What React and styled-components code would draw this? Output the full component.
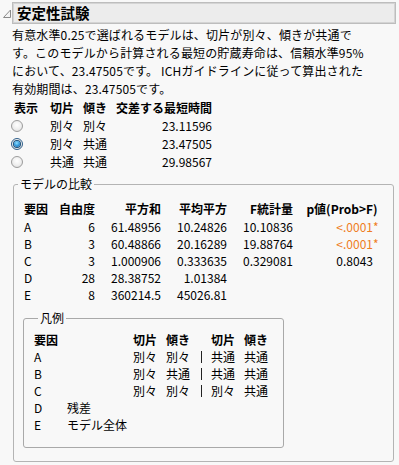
import { Fragment } from "react";
import styled, { createGlobalStyle } from "styled-components";

const Global = createGlobalStyle`
  html, body {
    margin: 0;
    background: #f8f8f8;
  }
  body {
    font-family: "Noto Sans CJK JP", "Noto Sans", sans-serif;
    font-size: 12px;
    color: #000;
  }
`

const Page = styled.div`
  width: 399px;
  height: 465px;
  box-sizing: border-box;
  padding: 2px 3px 0 3px;
  overflow: hidden;
`

const TitleRow = styled.div`
  display: flex;
  align-items: center;
`

const Disclosure = styled.svg`
  width: 9px;
  height: 22px;
  flex: none;
`

const TitleBox = styled.div`
  flex: 1;
  height: 22px;
  box-sizing: border-box;
  border: 1px solid #bdbdbd;
  outline: 1px solid #d4d4d4;
  outline-offset: -2px;
  background: #ececec;
  padding-left: 4px;
  font-size: 14.5px;
  font-weight: 700;
  line-height: 20px;
`

const Body = styled.div`
  margin-left: 9px;
`

const Note = styled.p`
  margin: 2px 0 0 0;
  line-height: 18px;
  white-space: nowrap;
  letter-spacing: 0.15px;
`

const Grid = styled.div`
  display: grid;
  grid-template-columns: ${props => props.$cols};
  grid-template-rows: ${props => props.$rows};
  margin-left: ${props => props.$indent || 0}px;
  white-space: nowrap;
`

const Cell = styled.div`
  display: flex;
  align-items: center;
  justify-content: ${props => props.$align === "right" ? "flex-end" : props.$align === "center" ? "center" : "flex-start"};
  padding-right: ${props => props.$pad || 0}px;
  font-weight: ${props => props.$head ? 700 : 400};
  color: ${props => props.$hot ? "#ef7d22" : "#000"};
`

const Star = styled.span`
  margin-right: -9px;
  width: 9px;
`

const Radio = styled.span`
  width: 12px;
  height: 12px;
  box-sizing: border-box;
  border-radius: 50%;
  margin-left: -3px;
  margin-top: 2px;
  border: 1px solid ${props => props.$on ? "#2f5f8a" : "#9c9c9c"};
  background: radial-gradient(circle at 50% 40%, #ffffff 0%, #eeeeee 55%, #d6d6d6 100%);
  display: flex;
  align-items: center;
  justify-content: center;
  &::after {
    content: "";
    display: ${props => props.$on ? "block" : "none"};
    width: 6px;
    height: 6px;
    border-radius: 50%;
    background: radial-gradient(circle at 45% 35%, #8fe0ff 0%, #2c93d8 55%, #135b94 100%);
    box-shadow: 0 0 0 1px #1c4f78;
  }
`

const GroupBox = styled.fieldset`
  margin: ${props => props.$outer ? "5px 2px 0 1px" : "6px 0 0 9px"};
  padding: ${props => props.$outer ? "6px 0 13px 0" : "3px 5px 14px 10px"};
  border: 1px solid ${props => props.$outer ? "#b4b4b4" : "#a9a9a9"};
  border-radius: 3px;
  width: ${props => props.$outer ? "auto" : "fit-content"};
  min-width: 0;
`

const GroupLegend = styled.legend`
  margin-left: 4px;
  padding: 0 2px;
  line-height: 18px;
`

const Sep = styled.span`
  display: block;
  width: 1px;
  height: 12px;
  margin-left: 2px;
  background: #222;
`

const choices = [
  ["別々", "別々", "23.11596", false],
  ["別々", "共通", "23.47505", true],
  ["共通", "共通", "29.98567", false],
]

const stats = [
  ["A", "6", "61.48956", "10.24826", "10.10836", "<.0001", true],
  ["B", "3", "60.48866", "20.16289", "19.88764", "<.0001", true],
  ["C", "3", "1.000906", "0.333635", "0.329081", "0.8043", false],
  ["D", "28", "28.38752", "1.01384", "", "", false],
  ["E", "8", "360214.5", "45026.81", "", "", false],
]

const legend = [
  ["A", "", "別々", "別々", "共通", "共通"],
  ["B", "", "別々", "共通", "共通", "共通"],
  ["C", "", "別々", "別々", "別々", "共通"],
  ["D", "残差", "", "", "", ""],
  ["E", "モデル全体", "", "", "", ""],
]

export default function App() {
  return (
    <Page>
      <Global />
      <TitleRow>
        <Disclosure viewBox="0 0 9 22">
          <polygon points="7.5,8 7.5,15.5 0.5,15.5" fill="#f4f4f4" stroke="#8a8a8a" strokeWidth="1" />
        </Disclosure>
        <TitleBox>安定性試験</TitleBox>
      </TitleRow>
      <Body>
        <Note>
          有意水準0.25で選ばれるモデルは、切片が別々、傾きが共通で<br />
          す。このモデルから計算される最短の貯蔵寿命は、信頼水準95%<br />
          において、23.47505です。 ICHガイドラインに従って算出された<br />
          有効期間は、23.47505です。
        </Note>

        <Grid $cols="36px 33px 33px 96px" $rows="repeat(4, 18px)" $indent={2}>
          <Cell $head>表示</Cell>
          <Cell $head>切片</Cell>
          <Cell $head>傾き</Cell>
          <Cell $head>交差する最短時間</Cell>
          {choices.map((c) => (
            <Fragment key={c[2]}>
              <Cell><Radio $on={c[3]} /></Cell>
              <Cell>{c[0]}</Cell>
              <Cell>{c[1]}</Cell>
              <Cell $align="right">{c[2]}</Cell>
            </Fragment>
          ))}
        </Grid>

        <GroupBox $outer>
          <GroupLegend>モデルの比較</GroupLegend>
          <Grid $cols="36px 35px 66px 66px 66px 98px" $rows="19px repeat(5, 17px)" $indent={10}>
            <Cell $head>要因</Cell>
            <Cell $head $align="right">自由度</Cell>
            <Cell $head $align="right">平方和</Cell>
            <Cell $head $align="right">平均平方</Cell>
            <Cell $head $align="right">F統計量</Cell>
            <Cell $head $align="center">p値(Prob&gt;F)</Cell>
            {stats.map((s) => (
              <Fragment key={s[0]}>
                <Cell>{s[0]}</Cell>
                <Cell $align="right">{s[1]}</Cell>
                <Cell $align="right">{s[2]}</Cell>
                <Cell $align="right">{s[3]}</Cell>
                <Cell $align="right">{s[4]}</Cell>
                <Cell $align="right" $pad={18} $hot={s[6]}>
                  {s[5]}{s[6] && <Star>*</Star>}
                </Cell>
              </Fragment>
            ))}
          </Grid>

          <GroupBox>
            <GroupLegend>凡例</GroupLegend>
            <Grid $cols="33px 66px 33px 33px 12px 33px 34px" $rows="18px repeat(5, 17px)">
              <Cell $head>要因</Cell>
              <Cell />
              <Cell $head>切片</Cell>
              <Cell $head>傾き</Cell>
              <Cell />
              <Cell $head>切片</Cell>
              <Cell $head>傾き</Cell>
              {legend.map((l) => (
                <Fragment key={l[0]}>
                  <Cell>{l[0]}</Cell>
                  <Cell>{l[1]}</Cell>
                  <Cell>{l[2]}</Cell>
                  <Cell>{l[3]}</Cell>
                  <Cell>{l[4] && <Sep />}</Cell>
                  <Cell>{l[4]}</Cell>
                  <Cell>{l[5]}</Cell>
                </Fragment>
              ))}
            </Grid>
          </GroupBox>
        </GroupBox>
      </Body>
    </Page>
  )
}
